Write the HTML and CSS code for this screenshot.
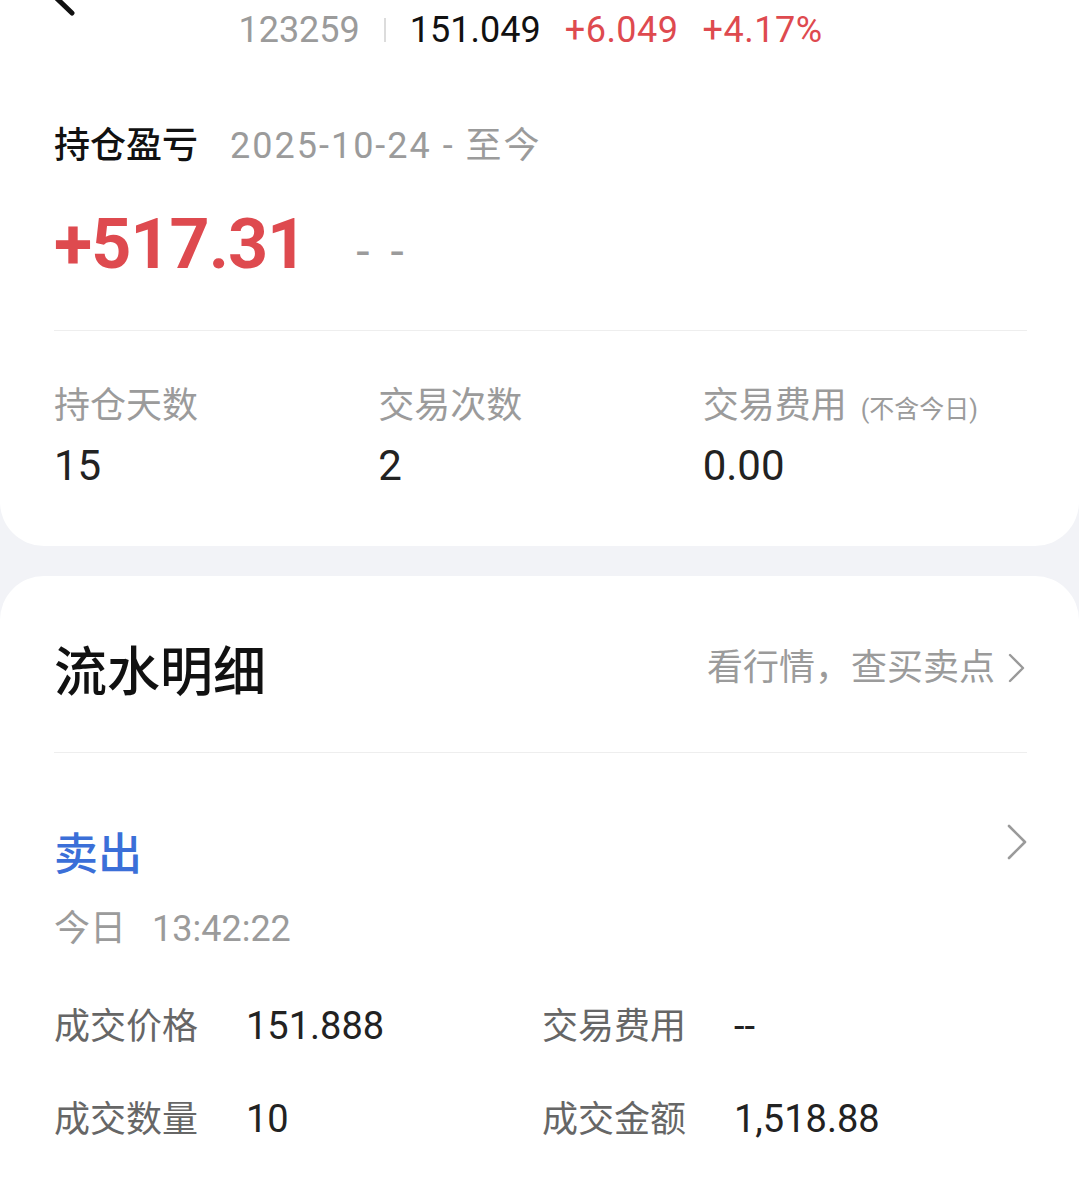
FILE: index.html
```html
<!DOCTYPE html>
<html lang="zh-CN">
<head>
<meta charset="utf-8">
<title>持仓盈亏</title>
<link rel="stylesheet" href="styles.css">
</head>
<body>
<div class="page">
  <section class="card card-top">
    <header class="nav">
      <svg class="back" width="40" height="24" viewBox="0 0 40 24" aria-hidden="true">
        <path d="M-2 -10 L 22 13" fill="none" stroke="#111" stroke-width="5" stroke-linecap="round"/>
      </svg>
      <span class="code">123259</span>
      <span class="sep"></span>
      <span class="price">151.049</span>
      <span class="up">+6.049</span>
      <span class="up">+4.17%</span>
    </header>

    <div class="title-row">
      <span class="title">持仓盈亏</span>
      <span class="date">2025-10-24 - 至今</span>
    </div>

    <div class="pnl-row">
      <span class="pnl">+517.31</span>
      <span class="pnl-rate">- -</span>
    </div>

    <div class="divider"></div>

    <div class="stats">
      <div class="stat">
        <div class="stat-label">持仓天数</div>
        <div class="stat-value">15</div>
      </div>
      <div class="stat">
        <div class="stat-label">交易次数</div>
        <div class="stat-value">2</div>
      </div>
      <div class="stat">
        <div class="stat-label">交易费用<span class="note">(不含今日)</span></div>
        <div class="stat-value">0.00</div>
      </div>
    </div>
  </section>

  <section class="card card-list">
    <div class="list-head">
      <span class="list-title">流水明细</span>
      <span class="list-link">看行情，查买卖点
        <svg class="chev-sm" width="20" height="32" viewBox="0 0 20 32" aria-hidden="true">
          <path d="M3 3 L16 16 L3 29" fill="none" stroke="#9a9a9a" stroke-width="2.4" stroke-linecap="round" stroke-linejoin="round"/>
        </svg>
      </span>
    </div>

    <div class="divider"></div>

    <div class="trade">
      <div class="trade-head">
        <span class="trade-type">卖出</span>
        <svg class="chev" width="24" height="38" viewBox="0 0 24 38" aria-hidden="true">
          <path d="M4 3 L20 19 L4 35" fill="none" stroke="#9a9a9a" stroke-width="2.6" stroke-linecap="round" stroke-linejoin="round"/>
        </svg>
      </div>
      <div class="trade-time"><span>今日</span><span class="time">13:42:22</span></div>

      <div class="trade-grid">
        <div class="kv"><span class="k">成交价格</span><span class="v">151.888</span></div>
        <div class="kv"><span class="k">交易费用</span><span class="v">--</span></div>
        <div class="kv"><span class="k">成交数量</span><span class="v">10</span></div>
        <div class="kv"><span class="k">成交金额</span><span class="v">1,518.88</span></div>
      </div>
    </div>
  </section>
</div>
</body>
</html>
```

FILE: styles.css
```css
* { box-sizing: border-box; }

html, body {
  margin: 0;
  padding: 0;
}

body {
  background: #f2f3f7;
  font-family: Roboto, "Noto Sans CJK SC", sans-serif;
  color: #111;
  width: 1079px;
  height: 1179px;
  overflow: hidden;
}

.page {
  display: flex;
  flex-direction: column;
  gap: 30px;
}

.card {
  background: #fff;
  padding: 0 52px 0 54px;
}

.card-top {
  border-radius: 0 0 44px 44px;
  padding-top: 8px;
  padding-bottom: 55px;
}

.card-list {
  border-radius: 44px 44px 0 0;
  padding-top: 57px;
  padding-bottom: 60px;
}

/* nav */
.nav {
  position: relative;
  display: flex;
  justify-content: center;
  align-items: center;
  gap: 24px;
  height: 44px;
  line-height: 44px;
  font-size: 36px;
  padding-right: 20px;
}

.back {
  position: absolute;
  left: -4px;
  top: -8px;
}

.code { color: #9b9b9b; }
.price { color: #111; }
.up { color: #de4a4f; letter-spacing: 0.5px; }

.sep {
  width: 2px;
  height: 24px;
  background: #dcdcdc;
}

/* title */
.title-row {
  margin-top: 65px;
  display: flex;
  align-items: baseline;
  line-height: 50px;
  font-size: 36px;
}

.title {
  font-family: "Noto Sans CJK SC", sans-serif;
  font-weight: 500;
  color: #111;
}

.date {
  margin-left: 32px;
  color: #9b9b9b;
  letter-spacing: 2px;
}

.pnl-row {
  margin-top: 33px;
  display: flex;
  align-items: baseline;
  line-height: 80px;
}

.pnl {
  font-size: 70px;
  font-weight: 700;
  color: #de4a4f;
  letter-spacing: -1px;
}

.pnl-rate {
  margin-left: 50px;
  font-size: 48px;
  color: #9b9b9b;
  letter-spacing: 4.5px;
}

.divider {
  height: 1px;
  background: #eeeeee;
}

.card-top .divider { margin-top: 38px; }

/* stats */
.stats {
  margin-top: 50px;
  display: grid;
  grid-template-columns: repeat(3, 1fr);
}

.stat-label {
  font-size: 36px;
  line-height: 50px;
  color: #9b9b9b;
}

.note {
  font-size: 25px;
  line-height: 1;
  margin-left: 14px;
}

.stat-value {
  margin-top: 10px;
  font-size: 42px;
  line-height: 50px;
  color: #222;
}

/* list */
.list-head {
  display: flex;
  justify-content: space-between;
  align-items: center;
  height: 70px;
}

.list-title {
  font-family: "Noto Sans CJK SC", sans-serif;
  font-size: 53px;
  font-weight: 500;
  line-height: 70px;
  color: #111;
}

.list-link {
  display: flex;
  align-items: center;
  gap: 12px;
  font-size: 36px;
  line-height: 50px;
  color: #9b9b9b;
}

.card-list .divider { margin-top: 49px; }

.trade { margin-top: 70px; }

.trade-head {
  display: flex;
  justify-content: space-between;
  align-items: flex-start;
}

.trade-type {
  font-family: "Noto Sans CJK SC", sans-serif;
  font-size: 44px;
  font-weight: 500;
  line-height: 56px;
  color: #3b6fd8;
}

.chev { margin-right: -2px; }

.trade-time {
  margin-top: 25px;
  display: flex;
  gap: 26px;
  font-size: 36px;
  line-height: 50px;
  color: #9b9b9b;
}

.trade-grid {
  margin-top: 47px;
  display: grid;
  grid-template-columns: 488px 1fr;
  row-gap: 42px;
}

.kv {
  display: flex;
  align-items: baseline;
  gap: 48px;
  line-height: 50px;
}

.k {
  font-size: 36px;
  color: #666;
}

.v {
  font-size: 38px;
  color: #222;
}
```
